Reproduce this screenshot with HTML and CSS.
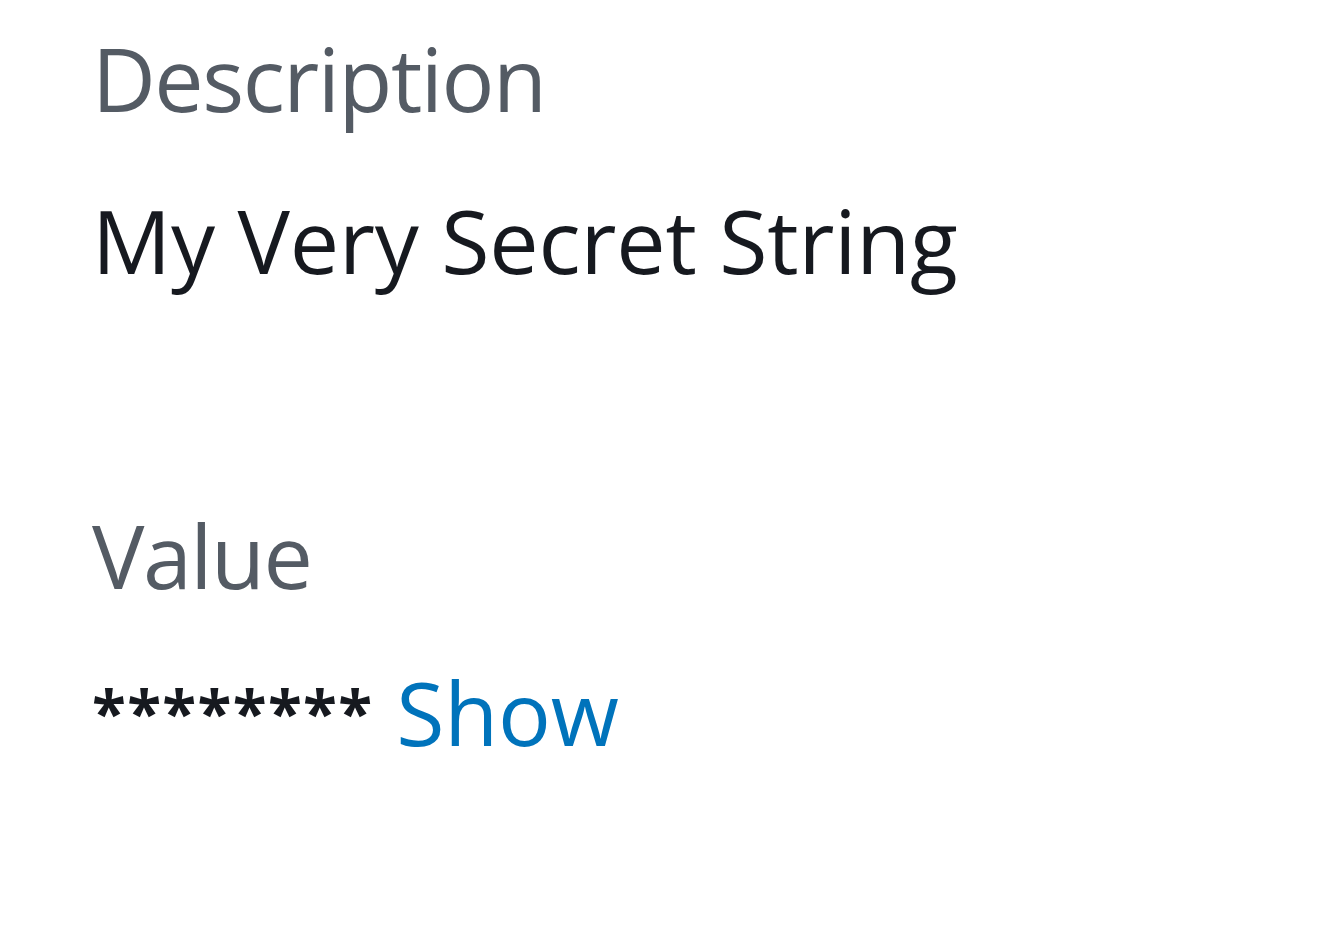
FILE: index.html
```html
<!DOCTYPE html>
<html lang="en">
<head>
<meta charset="utf-8">
<title>Secret details</title>
<link rel="stylesheet" href="styles.css">
</head>
<body>
<div class="details">
  <div class="field">
    <div class="label">Description</div>
    <div class="value">My Very Secret String</div>
  </div>
  <div class="field field-second">
    <div class="label">Value</div>
    <div class="value"><span class="mask">********</span> <a class="link" href="#">Show</a></div>
  </div>
</div>
</body>
</html>
```

FILE: styles.css
```css
html, body {
  margin: 0;
  padding: 0;
  background: #ffffff;
}
body {
  font-family: "Open Sans", "Noto Sans", sans-serif;
  width: 1330px;
  height: 927px;
  overflow: hidden;
}
.details {
  padding: 13px 0 0 92px;
  display: flex;
  flex-direction: column;
}
.field {
  display: flex;
  flex-direction: column;
  gap: 32px;
}
.field-second {
  margin-top: 185px;
  gap: 27px;
}
.label {
  font-size: 88px;
  line-height: 130px;
  font-weight: 500;
  color: #545b64;
  letter-spacing: -1.5px;
}
.value {
  font-size: 88px;
  line-height: 130px;
  font-weight: 500;
  color: #16191f;
  letter-spacing: -0.2px;
}
.mask {
  font-size: 62px;
  font-weight: 700;
  letter-spacing: 1.4px;
  vertical-align: 10px;
}
.link {
  color: #0073bb;
  text-decoration: none;
}
```
